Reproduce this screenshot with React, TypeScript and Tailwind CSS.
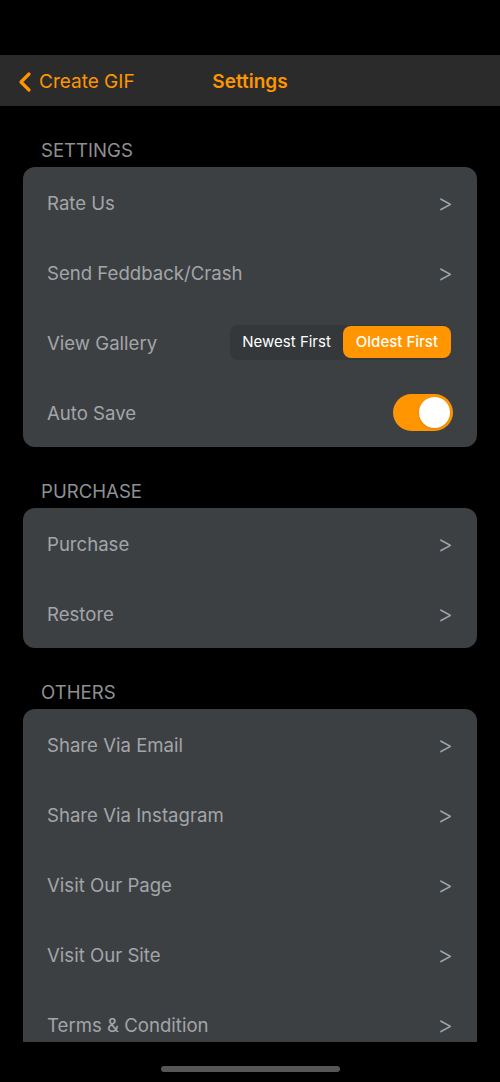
import { ChevronLeft } from "lucide-react";

const font = { fontFamily: "Inter, 'Liberation Sans', sans-serif" };

function Row({ label, children }: { label: string; children?: React.ReactNode }) {
  return (
    <div className="h-[70px] flex items-center justify-between pl-6 pr-6">
      <span className="text-[18.6px] text-[#a3a5a8] pt-[3px]">{label}</span>
      {children ?? <span className="text-[24px] font-light text-[#a3a5a8] leading-none pt-[3px]">&gt;</span>}
    </div>
  );
}

function Header({ title }: { title: string }) {
  return <div className="pl-[41px] pt-[33px] pb-[5px] text-[18.6px] leading-[23px] text-[#8e9093]">{title}</div>;
}

export default function App() {
  return (
    <div className="w-[500px] h-[1082px] bg-black flex flex-col overflow-hidden" style={font}>
      <div className="h-[55px] shrink-0" />
      <div className="h-[51px] shrink-0 bg-[#2b2b2b] relative flex items-center pt-[3px]">
        <div className="flex items-center pl-[9px] text-[#ff9500]">
          <ChevronLeft size={32} strokeWidth={2.4} />
          <span className="text-[19px] -ml-[2px]">Create GIF</span>
        </div>
        <div className="absolute left-0 right-0 text-center text-[19px] font-semibold text-[#ff9500] pointer-events-none">
          Settings
        </div>
      </div>

      <div className="flex-1 overflow-hidden">
        <div>
          <Header title="SETTINGS" />
          <div className="mx-[23px] rounded-[12px] bg-[#3d4043]">
            <Row label="Rate Us" />
            <Row label="Send Feddback/Crash" />
            <Row label="View Gallery">
              <div className="flex items-center bg-[#35383b] rounded-[8px] h-[35px] mr-[2px]">
                <span className="px-[12px] text-[15px] text-white">Newest First</span>
                <span className="h-[32px] px-[13px] flex items-center rounded-[8px] bg-[#ff9500] text-white text-[15px] font-medium">
                  Oldest First
                </span>
              </div>
            </Row>
            <Row label="Auto Save">
              <div className="w-[60px] h-[37px] rounded-full bg-[#ff9500] relative">
                <div className="absolute right-[3px] top-[3px] w-[31px] h-[31px] rounded-full bg-white shadow" />
              </div>
            </Row>
          </div>

          <Header title="PURCHASE" />
          <div className="mx-[23px] rounded-[12px] bg-[#3d4043]">
            <Row label="Purchase" />
            <Row label="Restore" />
          </div>

          <Header title="OTHERS" />
          <div className="mx-[23px] rounded-t-[12px] bg-[#3d4043] h-[333px] overflow-hidden">
            <Row label="Share Via Email" />
            <Row label="Share Via Instagram" />
            <Row label="Visit Our Page" />
            <Row label="Visit Our Site" />
            <Row label="Terms & Condition" />
          </div>
        </div>
      </div>

      <div className="h-[40px] shrink-0 flex justify-center items-start pt-[24px]">
        <div className="w-[179px] h-[6px] rounded-full bg-[#555658]" />
      </div>
    </div>
  );
}
